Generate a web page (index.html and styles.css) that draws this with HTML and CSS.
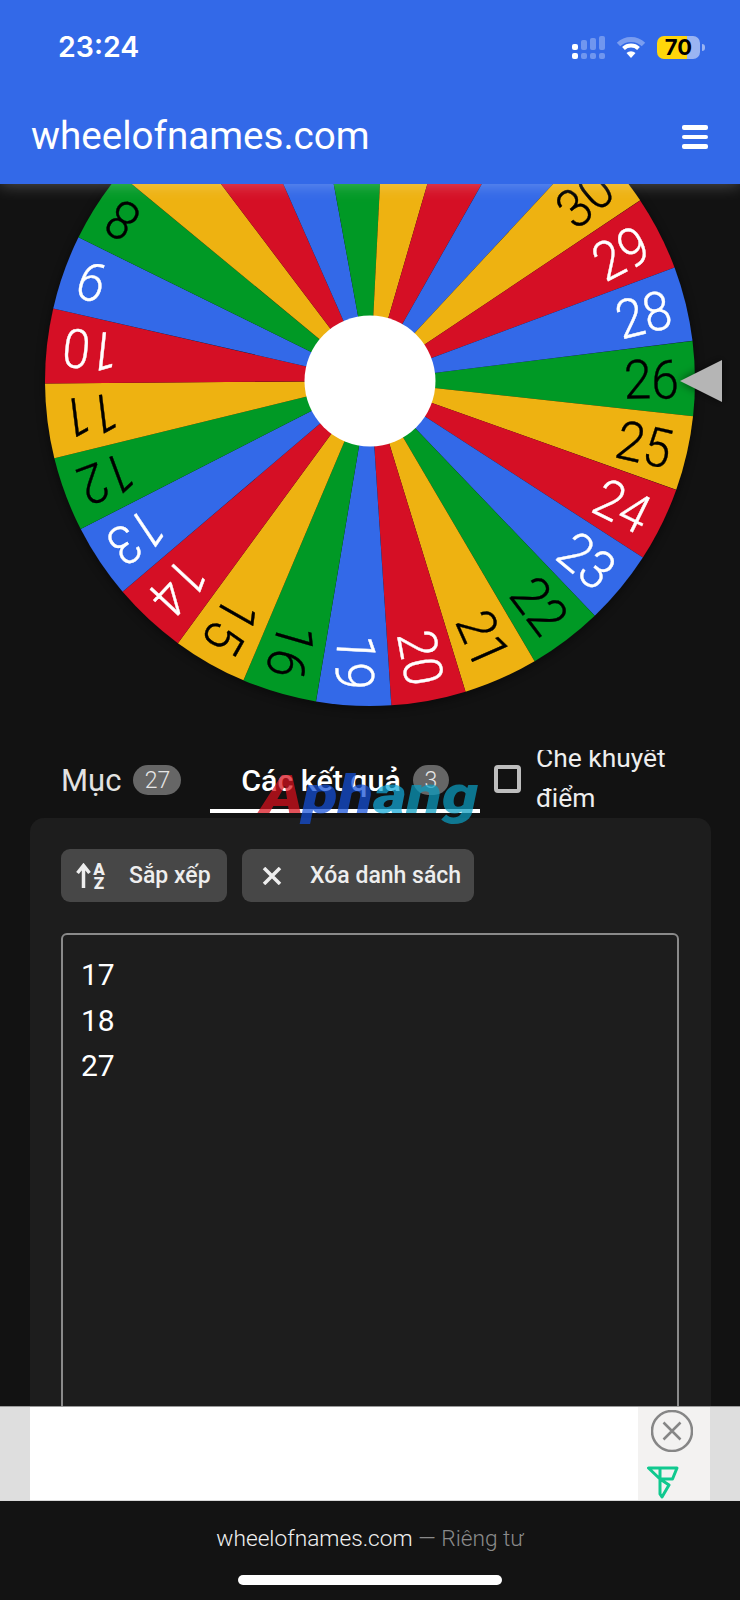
FILE: index.html
```html
<!DOCTYPE html>
<html lang="vi">
<head>
<meta charset="utf-8">
<title>wheelofnames.com</title>
<link rel="stylesheet" href="styles.css">
</head>
<body>
<div class="page">
  <header class="header">
    <div class="status">
      <span class="time">23:24</span>
      <div class="status-icons">
        <svg class="signal" width="33" height="23" viewBox="0 0 33 23">
          <rect class="on" x="0" y="8" width="6" height="6" rx="2"/>
          <rect class="on" x="0" y="17" width="6" height="6" rx="2"/>
          <rect class="dim" x="9" y="4" width="6" height="10" rx="2"/>
          <rect class="dim" x="9" y="17" width="6" height="6" rx="2"/>
          <rect class="dim" x="18" y="2" width="6" height="12" rx="2"/>
          <rect class="dim" x="18" y="17" width="6" height="6" rx="2"/>
          <rect class="dim" x="27" y="0" width="6" height="14" rx="2"/>
          <rect class="dim" x="27" y="17" width="6" height="6" rx="2"/>
        </svg>
        <svg class="wifi" width="30" height="23" viewBox="0 0 30 23">
          <path class="wifi-outer" d="M2.5 8.5A18 18 0 0 1 27.5 8.5"/>
          <path class="wifi-mid" d="M7.5 12.5A11 11 0 0 1 22.5 12.5"/>
          <path class="wifi-core" d="M10.5 17A6.5 6.5 0 0 1 19.5 17L15 22Z"/>
        </svg>
        <div class="battery"><span class="battery-level">70</span></div>
        <span class="battery-nub"></span>
      </div>
    </div>
    <nav class="nav">
      <span class="brand">wheelofnames.com</span>
      <div class="burger"><span></span><span></span><span></span></div>
    </nav>
  </header>

  <section class="stage">
    <svg class="wheel" width="740" height="566" viewBox="0 184 740 566">
      <defs>
        <path id="slice" d="M0 0L322.8-37.7A325 325 0 0 1 322.8 37.7Z"/>
        <filter id="soft" x="-30%" y="-30%" width="160%" height="160%"><feGaussianBlur stdDeviation="5"/></filter>
      </defs>
      <g transform="translate(370 381)">
        <circle class="wheel-shadow" r="326" cy="2" filter="url(#soft)"/>
        <use href="#slice" class="green" transform="rotate(-0.43)"/>
        <use href="#slice" class="yellow" transform="rotate(12.9)"/>
        <use href="#slice" class="red" transform="rotate(26.24)"/>
        <use href="#slice" class="blue" transform="rotate(39.57)"/>
        <use href="#slice" class="green" transform="rotate(52.9)"/>
        <use href="#slice" class="yellow" transform="rotate(66.24)"/>
        <use href="#slice" class="red" transform="rotate(79.57)"/>
        <use href="#slice" class="blue" transform="rotate(92.9)"/>
        <use href="#slice" class="green" transform="rotate(106.24)"/>
        <use href="#slice" class="yellow" transform="rotate(119.57)"/>
        <use href="#slice" class="red" transform="rotate(132.9)"/>
        <use href="#slice" class="blue" transform="rotate(146.24)"/>
        <use href="#slice" class="green" transform="rotate(159.57)"/>
        <use href="#slice" class="yellow" transform="rotate(172.9)"/>
        <use href="#slice" class="red" transform="rotate(186.24)"/>
        <use href="#slice" class="blue" transform="rotate(199.57)"/>
        <use href="#slice" class="green" transform="rotate(212.9)"/>
        <use href="#slice" class="yellow" transform="rotate(226.24)"/>
        <use href="#slice" class="red" transform="rotate(239.57)"/>
        <use href="#slice" class="blue" transform="rotate(252.9)"/>
        <use href="#slice" class="green" transform="rotate(266.24)"/>
        <use href="#slice" class="yellow" transform="rotate(279.57)"/>
        <use href="#slice" class="red" transform="rotate(292.9)"/>
        <use href="#slice" class="blue" transform="rotate(306.24)"/>
        <use href="#slice" class="yellow" transform="rotate(319.57)"/>
        <use href="#slice" class="red" transform="rotate(332.9)"/>
        <use href="#slice" class="blue" transform="rotate(346.24)"/>
        <g class="labels">
          <text class="ink" transform="rotate(-0.43) translate(309 0) scale(.92 1)" y="19.5">26</text>
          <text class="ink" transform="rotate(12.9) translate(309 0) scale(.92 1)" y="19.5">25</text>
          <text class="chalk" transform="rotate(26.24) translate(309 0) scale(.92 1)" y="19.5">24</text>
          <text class="chalk" transform="rotate(39.57) translate(309 0) scale(.92 1)" y="19.5">23</text>
          <text class="ink" transform="rotate(52.9) translate(309 0) scale(.92 1)" y="19.5">22</text>
          <text class="ink" transform="rotate(66.24) translate(309 0) scale(.92 1)" y="19.5">21</text>
          <text class="chalk" transform="rotate(79.57) translate(309 0) scale(.92 1)" y="19.5">20</text>
          <text class="chalk" transform="rotate(92.9) translate(309 0) scale(.92 1)" y="19.5">19</text>
          <text class="ink" transform="rotate(106.24) translate(309 0) scale(.92 1)" y="19.5">16</text>
          <text class="ink" transform="rotate(119.57) translate(309 0) scale(.92 1)" y="19.5">15</text>
          <text class="chalk" transform="rotate(132.9) translate(309 0) scale(.92 1)" y="19.5">14</text>
          <text class="chalk" transform="rotate(146.24) translate(309 0) scale(.92 1)" y="19.5">13</text>
          <text class="ink" transform="rotate(159.57) translate(309 0) scale(.92 1)" y="19.5">12</text>
          <text class="ink" transform="rotate(172.9) translate(309 0) scale(.92 1)" y="19.5">11</text>
          <text class="chalk" transform="rotate(186.24) translate(309 0) scale(.92 1)" y="19.5">10</text>
          <text class="chalk" transform="rotate(199.57) translate(309 0) scale(.92 1)" y="19.5">9</text>
          <text class="ink" transform="rotate(212.9) translate(309 0) scale(.92 1)" y="19.5">8</text>
          <text class="ink" transform="rotate(319.57) translate(309 0) scale(.92 1)" y="19.5">30</text>
          <text class="chalk" transform="rotate(332.9) translate(309 0) scale(.92 1)" y="19.5">29</text>
          <text class="chalk" transform="rotate(346.24) translate(309 0) scale(.92 1)" y="19.5">28</text>
        </g>
        <circle class="hub" r="65.5"/>
      </g>
      <path class="pointer-glow" d="M680 381L722 360V402Z" filter="url(#soft)"/>
      <path class="pointer" d="M680 381L722 360V402Z"/>
    </svg>
  </section>

  <div class="tabs">
    <div class="tab tab-entries">
      <span class="tab-name tab-name-plain">Mục</span>
      <span class="count count-wide">27</span>
    </div>
    <div class="tab tab-results">
      <span class="tab-name">Các kết quả</span>
      <span class="count">3</span>
    </div>
    <div class="cover">
      <span class="checkbox"></span>
      <div class="cover-clip"><span class="cover-text">Che khuyết điểm</span></div>
    </div>
    <div class="watermark"><span class="wm-red">A</span><span class="wm-blue">ph</span><span class="wm-cyan">a</span><span class="wm-teal">ng</span></div>
  </div>

  <main class="card">
    <div class="actions">
      <button class="action action-sort">
        <svg width="30" height="26" viewBox="0 0 30 26">
          <path class="sort-arrow" d="M7.5 25V3M1.5 10L7.5 2.5L13.5 10"/>
          <text class="sort-letter" x="23" y="12">A</text>
          <text class="sort-letter" x="23" y="26">Z</text>
        </svg>
        <span>Sắp xếp</span>
      </button>
      <button class="action action-clear">
        <svg width="20" height="18" viewBox="0 0 20 18"><path class="clear-x" d="M2 1L18 17M18 1L2 17"/></svg>
        <span>Xóa danh sách</span>
      </button>
    </div>
    <div class="results">
      <div>17</div>
      <div>18</div>
      <div>27</div>
    </div>
  </main>

  <aside class="ad">
    <div class="ad-side"></div>
    <div class="ad-body"></div>
    <div class="ad-panel">
      <svg width="42" height="42" viewBox="0 0 42 42"><circle class="ad-close" cx="21" cy="21" r="20"/><path class="ad-close" d="M12.5 12.5L29.5 29.5M29.5 12.5L12.5 29.5"/></svg>
      <svg class="ad-logo" width="32" height="33" viewBox="0 0 32 33"><path class="ad-mark" d="M1.5 2H30L25.5 13H13ZM13 2V13L22 19L15 31L13 28V13"/></svg>
    </div>
    <div class="ad-side"></div>
  </aside>

  <footer class="footer">
    <div class="address"><span>wheelofnames.com</span><span class="address-note"> — Riêng tư</span></div>
    <div class="home-bar"></div>
  </footer>
</div>
</body>
</html>
```
FILE: styles.css
```css
* { box-sizing: border-box; }
html, body { margin: 0; padding: 0; }
body { background: #121212; font-family: Roboto, "Liberation Sans", sans-serif; color: #fff; }

.page { width: 740px; height: 1600px; display: flex; flex-direction: column; overflow: hidden; background: #121212; }

/* Header */
.header { position: relative; z-index: 2; height: 184px; flex: none; padding-top: 27px; background: #3369e8; box-shadow: 0 0 16px rgba(255,255,255,.3); }
.status { display: flex; justify-content: space-between; align-items: center; height: 38px; padding: 0 35px 0 58px; }
.time { font-family: Inter, sans-serif; font-weight: 600; font-size: 28.5px; }
.status-icons { display: flex; align-items: center; margin-top: 2px; }
.signal .on { fill: #fff; }
.signal .dim { fill: rgba(255,255,255,.3); }
.wifi { margin-left: 11px; }
.wifi-outer { fill: none; stroke: rgba(255,255,255,.35); stroke-width: 5; }
.wifi-mid { fill: none; stroke: #fff; stroke-width: 4; }
.wifi-core { fill: #fff; }
.battery { width: 43px; height: 23px; margin-left: 11px; border-radius: 7px; background: linear-gradient(90deg, #ffd60a 0 70%, #9ab4f2 70%); color: #000; display: flex; justify-content: center; align-items: center; }
.battery-level { font-family: Inter, sans-serif; font-weight: 700; font-size: 22px; line-height: 1; }
.battery-nub { width: 3px; height: 7px; margin-left: 2px; border-radius: 0 3px 3px 0; background: #9ab4f2; }

.nav { display: flex; justify-content: space-between; align-items: center; padding: 0 32px 0 31px; height: 50px; margin-top: 46px; }
.brand { padding-bottom: 2px; font-size: 38.6px; font-weight: 400; white-space: nowrap; }
.burger { display: flex; flex-direction: column; gap: 5px; width: 26px; margin-top: 2px; }
.burger span { height: 4.5px; background: #fff; border-radius: 2px; }

/* Wheel */
.stage { height: 566px; flex: none; overflow: hidden; }
.wheel { display: block; }
.green { fill: #009925; }
.yellow { fill: #eeb211; }
.red { fill: #d50f25; }
.blue { fill: #3369e8; }
.wheel-shadow { fill: #050505; opacity: .4; }
.hub { fill: #fff; }
.labels text { font-family: Roboto, sans-serif; font-weight: 300; font-size: 54px; text-anchor: end; stroke-width: .4; stroke-linejoin: round; }
.ink { fill: #000; stroke: #000; }
.chalk { fill: #fff; stroke: #fff; }
.pointer { fill: #b5b5b5; }
.pointer-glow { fill: rgba(0,0,0,.6); }

/* Tabs */
.tabs { position: relative; display: flex; height: 63px; flex: none; padding-left: 30px; }
.tab { display: flex; align-items: center; gap: 12px; height: 63px; padding-top: 1px; border-bottom: 4px solid transparent; }
.tab-entries { width: 180px; padding-left: 31px; color: #e2e2e2; }
.tab-results { width: 270px; justify-content: center; border-bottom-color: #fff; }
.tab-name { font-size: 30.4px; font-weight: 500; white-space: nowrap; }
.tab-name-plain { font-weight: 400; font-size: 31px; }
.count { display: flex; align-items: center; justify-content: center; min-width: 36px; height: 30px; border-radius: 15px; background: #666; color: #e6e6e6; font-size: 23px; font-weight: 300; padding: 0 7px; }
.count-wide { min-width: 48px; }
.cover { display: flex; gap: 15px; margin-left: 14px; height: 63px; align-items: flex-start; }
.checkbox { width: 27px; height: 28px; margin-top: 15px; border: 4px solid #bdbdbd; border-radius: 4px; flex: none; }
.cover-clip { width: 150px; height: 66px; overflow: hidden; }
.cover-text { display: block; margin-top: -12px; font-size: 26.4px; line-height: 40px; color: #eee; }
.watermark { position: absolute; left: 261px; top: 18px; font-family: Roboto, sans-serif; font-weight: 900; font-style: italic; font-size: 54px; line-height: 54px; opacity: .72; white-space: nowrap; transform: scaleX(1.2); transform-origin: left; }
.wm-red { color: #d8101c; }
.wm-blue { color: #1450d8; }
.wm-cyan { color: #12a8d8; }
.wm-teal { color: #0a9cc0; }

/* Card */
.card { flex: 1; min-height: 0; margin: 5px 29px 0 30px; padding: 31px 32px 0 31px; background: #1d1d1d; border-radius: 14px 14px 0 0; overflow: hidden; }
.actions { display: flex; gap: 15px; }
.action { display: flex; align-items: center; height: 53px; border: 0; border-radius: 9px; background: #474747; color: #eee; font-family: Roboto, sans-serif; font-size: 23px; font-weight: 500; white-space: nowrap; }
.action-sort { width: 166px; padding: 0 0 0 15px; gap: 23px; }
.action-clear { width: 232px; padding: 0 0 0 20px; gap: 28px; }
.sort-arrow { fill: none; stroke: #eee; stroke-width: 3.5; }
.sort-letter { fill: #eee; font-family: Roboto, sans-serif; font-weight: 900; font-size: 17px; text-anchor: middle; }
.clear-x { fill: none; stroke: #eee; stroke-width: 3.5; }
.results { height: 620px; margin-top: 31px; padding: 17px 18px; border: 2px solid #8a8a8a; border-radius: 6px; font-size: 30px; line-height: 45.5px; color: #fff; }

/* Ad */
.ad { display: flex; height: 95px; flex: none; border-top: 1px solid #9a9a9a; border-bottom: 1px solid #d8d8d8; }
.ad-side { width: 30px; background: #dedede; }
.ad-body { flex: 1; background: #fff; }
.ad-panel { width: 72px; padding: 3px 0 0 13px; background: #f3f2f1; }
.ad-panel svg { display: block; }
.ad-close { fill: none; stroke: #868686; stroke-width: 2.5; }
.ad-logo { margin: 14px 0 0 -4px; }
.ad-mark { fill: none; stroke: #10c98f; stroke-width: 3; stroke-linejoin: round; }

/* Browser footer */
.footer { height: 99px; flex: none; background: #131313; display: flex; flex-direction: column; align-items: center; padding-top: 25px; }
.address { font-size: 22.7px; line-height: 26px; color: #f0f0f0; font-weight: 300; white-space: pre; }
.address-note { color: #8a8a8a; }
.home-bar { width: 264px; height: 10px; margin-top: 23px; border-radius: 5px; background: #fff; }
```
